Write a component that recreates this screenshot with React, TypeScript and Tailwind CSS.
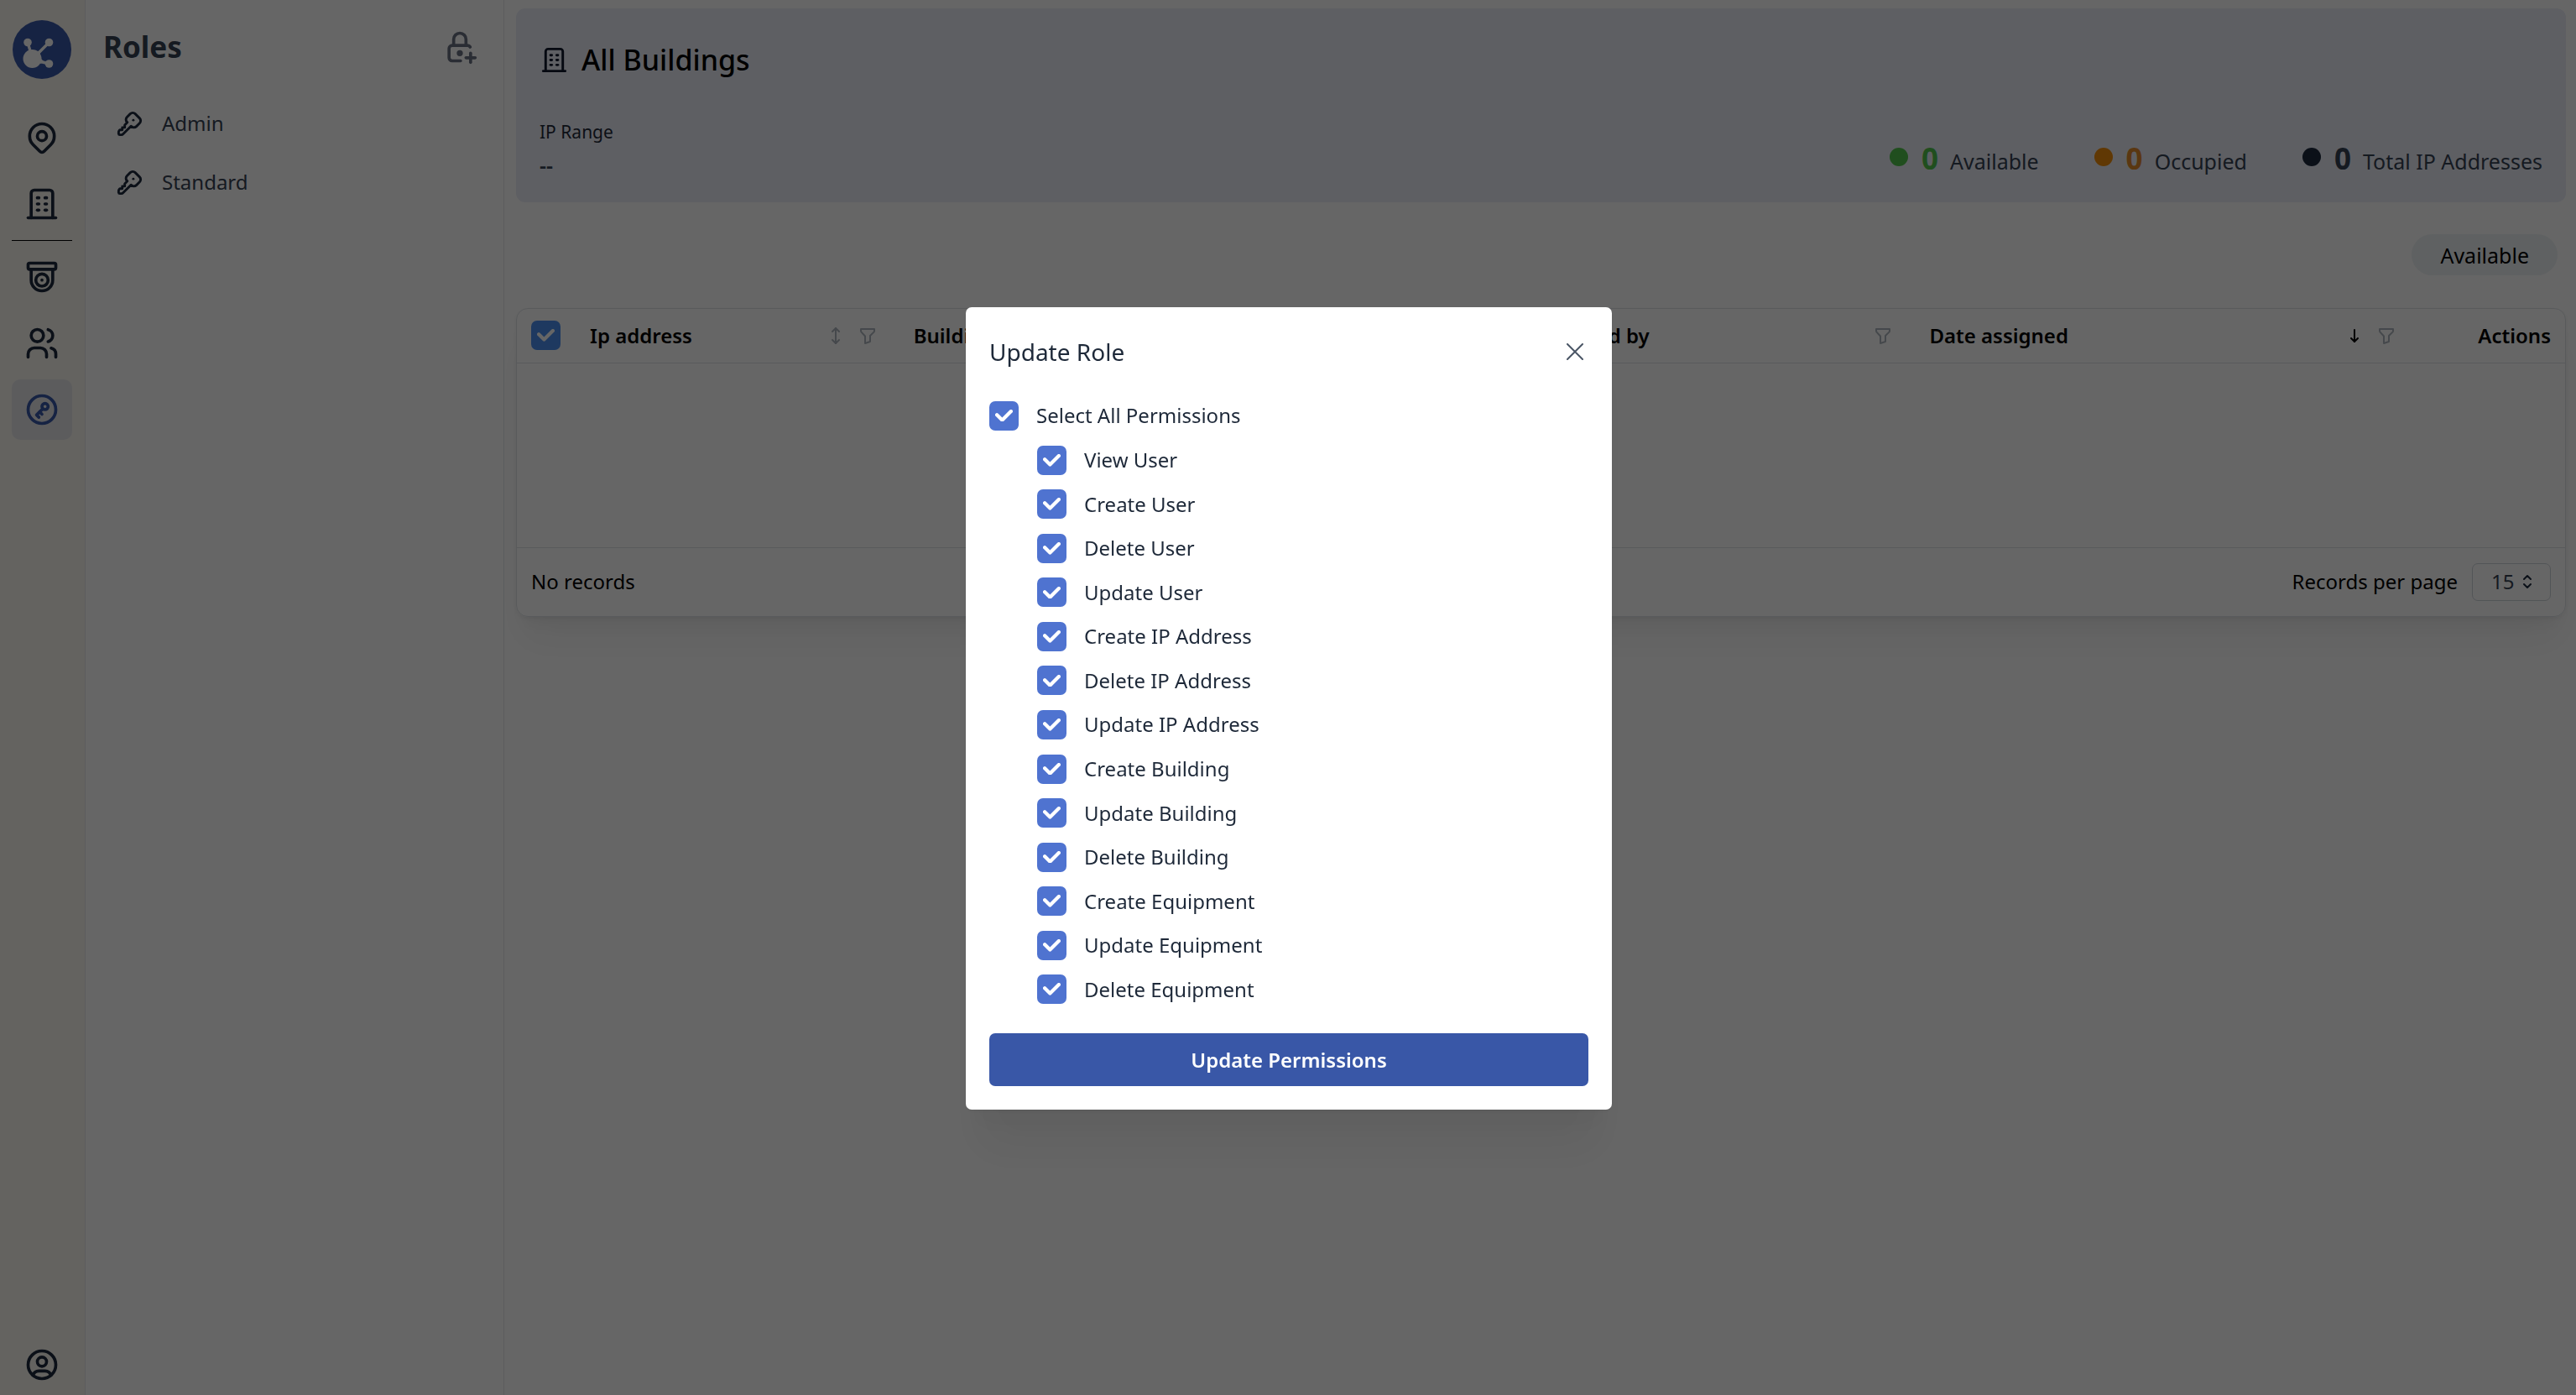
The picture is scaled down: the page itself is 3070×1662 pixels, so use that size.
import React from "react";
import {
  TbArrowNarrowDown,
  TbArrowsVertical,
  TbBuilding,
  TbCircleKey,
  TbDeviceCctv,
  TbFilter,
  TbKey,
  TbLockPlus,
  TbMapPin,
  TbSelector,
  TbUserCircle,
  TbUsers,
} from "react-icons/tb";

const permissions = [
  "View User",
  "Create User",
  "Delete User",
  "Update User",
  "Create IP Address",
  "Delete IP Address",
  "Update IP Address",
  "Create Building",
  "Update Building",
  "Delete Building",
  "Create Equipment",
  "Update Equipment",
  "Delete Equipment",
];

function Logo() {
  return (
    <svg viewBox="0 0 70 70" className="size-[70px]" aria-label="Home">
      <circle cx="35" cy="35" r="35" fill="#3957a7" />
      <g fill="#fff" stroke="#fff">
        <circle cx="23.5" cy="46" r="11" stroke="none" />
        <circle cx="18" cy="26.500" r="4.800" stroke="none" />
        <circle cx="43.500" cy="26.500" r="4.800" stroke="none" />
        <circle cx="43.500" cy="52" r="4.800" stroke="none" />
        <path d="M18 26.500 L22 40 M43.500 26.500 L28 42 M43.500 52 L28 48" strokeWidth="3.400" />
        <path d="M19 37 L20.500 32 L22.500 36 Z M29 38 L34 35.500 L32.500 41 Z M34 46 L38 50 L33 52 Z" stroke="none" />
      </g>
    </svg>
  );
}

function Check({ label, tone, children }: { label?: string; tone: string; children?: React.ReactNode }) {
  return (
    <label className="flex items-center gap-[21px]">
      <span className="relative flex size-[35px] shrink-0 items-center justify-center">
        <input
          type="checkbox"
          defaultChecked
          aria-label={label}
          className={`absolute inset-0 size-full appearance-none rounded-[7px] ${tone}`}
        />
        <svg viewBox="0 0 10 7" className="pointer-events-none relative w-[21px] text-white" aria-hidden="true">
          <path
            fill="currentColor"
            d="M4 4.586L1.707 2.293A1 1 0 1 0 .293 3.707l3 3a.997.997 0 0 0 1.414 0l5-5A1 1 0 1 0 8.293.293L4 4.586z"
          />
        </svg>
      </span>
      {children}
    </label>
  );
}

function RailButton({ label, active, children }: { label: string; active?: boolean; children: React.ReactNode }) {
  return (
    <button
      aria-label={label}
      className={`flex size-[72px] shrink-0 items-center justify-center rounded-[10px] text-[44px] ${
        active ? "bg-[#e6e7e9] text-[#3957a7]" : "text-slate-800"
      }`}
    >
      {children}
    </button>
  );
}

function Rail() {
  return (
    <nav className="flex w-[102px] shrink-0 flex-col items-center gap-[7px] border-r border-gray-200 bg-[#faf7f1] pt-6 pr-px">
      <a href="#home" className="mb-[27px]">
        <Logo />
      </a>
      <RailButton label="Locations"><TbMapPin /></RailButton>
      <RailButton label="Buildings"><TbBuilding /></RailButton>
      <hr className="w-[72px] border-t border-black" />
      <RailButton label="Equipment"><TbDeviceCctv /></RailButton>
      <RailButton label="Users"><TbUsers /></RailButton>
      <RailButton label="Roles" active><TbCircleKey /></RailButton>
      <div className="mt-auto">
        <RailButton label="Account"><TbUserCircle /></RailButton>
      </div>
    </nav>
  );
}

function RolesPanel() {
  return (
    <aside className="flex w-[499px] shrink-0 flex-col border-r border-gray-200 pt-8 text-[24px] text-gray-700">
      <div className="flex items-center justify-between pr-[30px] pl-[21px]">
        <h2 className="text-[35px] leading-[48px] font-bold">Roles</h2>
        <button aria-label="Add role" className="text-[44px] text-gray-500">
          <TbLockPlus />
        </button>
      </div>
      <ul className="mt-8 px-[35px]">
        {["Admin", "Standard"].map((role) => (
          <li key={role}>
            <a href={`#${role.toLowerCase()}`} className="flex h-[70px] items-center gap-[21px]">
              <TbKey className="text-[35px] text-slate-800" />
              {role}
            </a>
          </li>
        ))}
      </ul>
    </aside>
  );
}

function Stat({ dot, tone, label }: { dot: string; tone: string; label: string }) {
  return (
    <div className="flex items-baseline">
      <span className={`mr-4 mb-1 size-[22px] self-center rounded-full ${dot}`} />
      <span className={`mr-[14px] text-[35px] leading-[48px] font-bold ${tone}`}>0</span>
      <span className="text-gray-700">{label}</span>
    </div>
  );
}

function Summary() {
  return (
    <section className="flex h-[231px] flex-col justify-between rounded-[11px] bg-[#ebeef8] px-7 pt-[37px] pb-[26px]">
      <h1 className="flex items-center gap-[15px] text-[34px] leading-[48px] font-medium text-black">
        <TbBuilding className="text-[35px] text-slate-900" />
        All Buildings
      </h1>
      <div className="flex items-end justify-between">
        <dl>
          <dt className="text-[21px] leading-8 text-gray-800">IP Range</dt>
          <dd className="mt-1 font-semibold text-gray-700">--</dd>
        </dl>
        <div className="mb-0.5 flex gap-[66px]">
          <Stat dot="bg-[#52c44c]" tone="text-[#52c44c]" label="Available" />
          <Stat dot="bg-[#f08c0a]" tone="text-[#e08a2c]" label="Occupied" />
          <Stat dot="bg-slate-800" tone="text-gray-700" label="Total IP Addresses" />
        </div>
      </div>
    </section>
  );
}

function Th({ title, sort, filter }: { title: string; sort?: React.ReactNode; filter?: boolean }) {
  return (
    <th className="px-[17px] font-semibold">
      <div className="flex items-center gap-[14px] text-left">
        <span className="mr-auto">{title}</span>
        {sort}
        {filter && (
          <button aria-label={`Filter ${title}`} className="mr-[9px] text-2xl text-[#adb5bd]">
            <TbFilter />
          </button>
        )}
      </div>
    </th>
  );
}

function Records() {
  return (
    <section className="mt-[39px] rounded-[14px] border border-[#dee2e6] shadow-[0_2px_5px_rgba(0,0,0,0.05),0_35px_44px_-9px_rgba(0,0,0,0.05),0_18px_18px_-9px_rgba(0,0,0,0.04)]">
      <table className="w-full table-fixed text-[24px] text-black">
        <colgroup>
          <col className="w-[70px]" />
          <col className="w-[15.8%]" />
          <col className="w-[30.2%]" />
          <col className="w-[19.4%]" />
          <col />
          <col className="w-[175px]" />
        </colgroup>
        <thead>
          <tr className="h-16 border-b border-[#dee2e6]">
            <th className="pl-[17px]">
              <Check label="Select all records" tone="bg-[#4b8ff0]" />
            </th>
            <Th
              title="Ip address"
              filter
              sort={
                <button aria-label="Sort by ip address" className="text-2xl text-[#adb5bd]">
                  <TbArrowsVertical />
                </button>
              }
            />
            <Th title="Building" filter />
            <Th title="Assigned by" filter />
            <Th
              title="Date assigned"
              filter
              sort={
                <button aria-label="Sort by date assigned" className="text-2xl">
                  <TbArrowNarrowDown />
                </button>
              }
            />
            <th className="pr-[17px] text-right font-semibold">Actions</th>
          </tr>
        </thead>
        <tbody>
          <tr className="h-[220px] border-b border-[#dee2e6]">
            <td colSpan={6} />
          </tr>
        </tbody>
      </table>
      <footer className="flex h-[81px] items-center justify-between px-[17px] text-[24px] text-black">
        <p>No records</p>
        <label className="flex items-center gap-[17px]">
          Records per page
          <span className="relative flex items-center">
            <select className="h-[45px] w-[94px] appearance-none rounded-[7px] border border-[#ced4da] pl-[22px] text-gray-700">
              <option>15</option>
            </select>
            <TbSelector className="pointer-events-none absolute right-4 text-2xl text-slate-800" />
          </span>
        </label>
      </footer>
    </section>
  );
}

function UpdateRoleDialog() {
  return (
    <div className="fixed inset-0 flex items-start justify-center bg-black/60 pt-[366px] pl-0.5">
      <div
        role="dialog"
        aria-modal="true"
        aria-labelledby="dialog-title"
        className="w-[770px] rounded-[7px] bg-white p-7 text-[24px] text-gray-800 shadow-[0_2px_5px_rgba(0,0,0,0.05),0_63px_49px_-12px_rgba(0,0,0,0.05),0_30px_30px_-12px_rgba(0,0,0,0.04)]"
      >
        <header className="flex h-[50px] items-center justify-between">
          <h2 id="dialog-title" className="text-[28px]">Update Role</h2>
          <button aria-label="Close" className="mr-1.5 text-gray-600">
            <svg viewBox="0 0 20 20" className="size-5" fill="none" stroke="currentColor" strokeWidth="2" strokeLinecap="round">
              <path d="M1 1 L19 19 M19 1 L1 19" />
            </svg>
          </button>
        </header>
        <form onSubmit={(e) => e.preventDefault()}>
          <div className="mt-8">
            <Check tone="bg-[#4f73d0]">Select All Permissions</Check>
          </div>
          <ul className="mt-2 ml-[57px] grid h-[683px] auto-rows-fr items-center">
            {permissions.map((permission) => (
              <li key={permission}>
                <Check tone="bg-[#4f73d0]">{permission}</Check>
              </li>
            ))}
          </ul>
          <button type="submit" className="mt-[26px] h-[63px] w-full rounded-[7px] bg-[#3957a7] font-semibold text-white">
            Update Permissions
          </button>
        </form>
      </div>
    </div>
  );
}

export default function App() {
  return (
    <div className="flex min-h-screen bg-white font-['Noto_Sans',sans-serif] text-[25px] leading-[38px]">
      <Rail />
      <RolesPanel />
      <main className="flex-1 pt-[10px] pr-3 pl-[14px]">
        <Summary />
        <div className="mt-[38px] mr-[10px] flex justify-end">
          <button className="h-[49px] rounded-full bg-[#eef3f5] px-[34px] text-black">Available</button>
        </div>
        <Records />
      </main>
      <UpdateRoleDialog />
    </div>
  );
}
